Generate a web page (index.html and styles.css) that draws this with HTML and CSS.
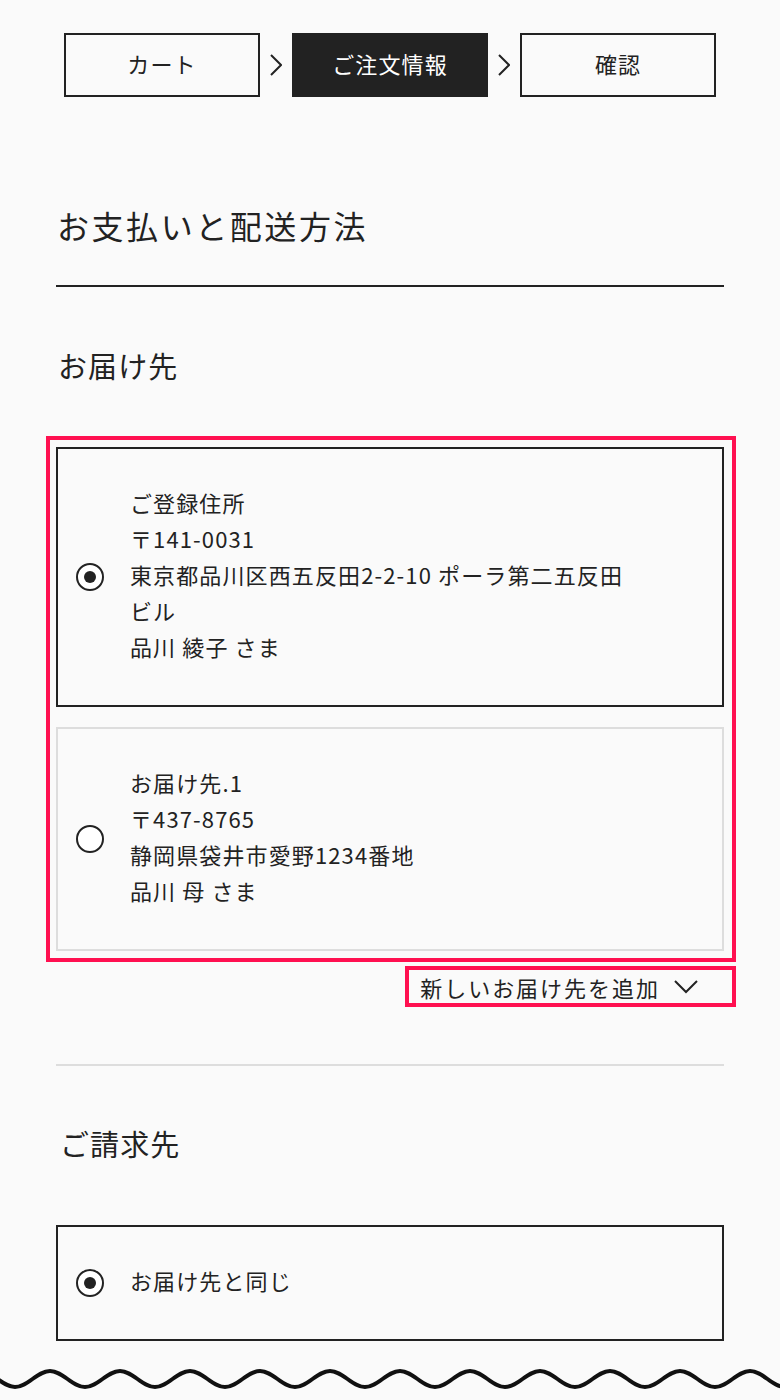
FILE: index.html
```html
<!DOCTYPE html>
<html lang="ja">
<head>
  <meta charset="UTF-8">
  <title>ご注文情報</title>
  <link rel="stylesheet" href="styles.css">
</head>
<body>

<!-- Steps -->
<ol class="steps">
  <li class="step">カート</li>
  <li class="step-arrow"><svg width="12" height="22" viewBox="0 0 12 22"><polyline points="1,1 11,11 1,21" /></svg></li>
  <li class="step active">ご注文情報</li>
  <li class="step-arrow"><svg width="12" height="22" viewBox="0 0 12 22"><polyline points="1,1 11,11 1,21" /></svg></li>
  <li class="step">確認</li>
</ol>

<div class="container">
  <h1 class="page-title">お支払いと配送方法</h1>

  <!-- Delivery address -->
  <section class="section">
    <h2 class="section-title">お届け先</h2>

    <div class="mark">
      <label class="option selected">
        <input type="radio" name="shipping" checked>
        <span class="option-text">
          ご登録住所<br>
          〒141-0031<br>
          東京都品川区西五反田2-2-10 ポーラ第二五反田<span class="word">ビル</span><br>
          品川 綾子 さま
        </span>
      </label>
      <label class="option">
        <input type="radio" name="shipping">
        <span class="option-text">
          お届け先.1<br>
          〒437-8765<br>
          静岡県袋井市愛野1234番地<br>
          品川 母 さま
        </span>
      </label>
    </div>

    <div class="add-row">
      <button class="add-link">
        新しいお届け先を追加
        <svg width="24" height="14" viewBox="0 0 24 14"><polyline points="1,1 12,12 23,1" /></svg>
      </button>
    </div>
  </section>

  <!-- Billing address -->
  <section class="section billing">
    <h2 class="section-title">ご請求先</h2>

    <label class="option selected">
      <input type="radio" name="billing" checked>
      <span class="option-text">お届け先と同じ</span>
    </label>
  </section>
</div>

<svg class="wave" width="780" height="32" viewBox="0 0 780 32">
  <path d="M-20 8 c13 0 22 16 35 16 s22 -16 35 -16 s22 16 35 16 s22 -16 35 -16 s22 16 35 16 s22 -16 35 -16 s22 16 35 16 s22 -16 35 -16 s22 16 35 16 s22 -16 35 -16 s22 16 35 16 s22 -16 35 -16 s22 16 35 16 s22 -16 35 -16 s22 16 35 16 s22 -16 35 -16 s22 16 35 16 s22 -16 35 -16 s22 16 35 16 s22 -16 35 -16 s22 16 35 16 s22 -16 35 -16 s22 16 35 16 s22 -16 35 -16 s22 16 35 16" />
</svg>

</body>
</html>
```

FILE: styles.css
```css
body {
  font-family: "Noto Sans CJK JP", "Noto Sans", sans-serif;
  margin: 0;
  background: #fafafa;
  color: #222;
  letter-spacing: 0.07em;
}

/* Steps */
.steps {
  display: flex;
  justify-content: center;
  align-items: center;
  list-style: none;
  margin: 33px 0 0;
  padding: 0;
}

.step {
  width: 196px;
  height: 64px;
  box-sizing: border-box;
  border: 2px solid #222;
  padding-bottom: 5px;
  display: flex;
  align-items: center;
  justify-content: center;
  font-size: 22px;
}

.step.active {
  background: #222;
  color: #fff;
}

.step-arrow {
  width: 32px;
  display: flex;
  justify-content: center;
}

.step-arrow svg polyline {
  fill: none;
  stroke: #222;
  stroke-width: 2;
}

/* Content */
.container {
  width: 668px;
  margin: 0 auto;
}

.page-title {
  font-size: 32px;
  font-weight: normal;
  line-height: 48px;
  letter-spacing: 0.08em;
  margin: 104px 0 0;
  padding: 0 0 36px 1px;
  border-bottom: 2px solid #222;
}

.section-title {
  font-size: 29px;
  font-weight: normal;
  line-height: 42px;
  margin: 57px 0 61px 2px;
}

.billing {
  margin-top: 57px;
  border-top: 2px solid #ddd;
}

.billing .section-title {
  margin-top: 56px;
  margin-left: 4px;
}

/* Red highlight boxes */
.mark {
  margin: -11px -12px 0 -10px;
  padding: 7px 8px 7px 6px;
  border: 4px solid #ff1050;
  display: flex;
  flex-direction: column;
  gap: 20px;
}

/* Options */
.option {
  display: flex;
  align-items: center;
  border: 2px solid #ddd;
  padding: 38px 60px 38px 18px;
  font-size: 22px;
  line-height: 36px;
  cursor: pointer;
}

.option.selected {
  border-color: #222;
}

.option-text {
  margin: -3px 0 3px;
}

.option .word {
  white-space: nowrap;
}

.option input {
  appearance: none;
  flex: none;
  width: 28px;
  height: 28px;
  margin: 0 26px 0 0;
  border: 2px solid #222;
  border-radius: 50%;
  display: flex;
  align-items: center;
  justify-content: center;
  background: #fff;
}

.option input:checked::after {
  content: "";
  width: 12px;
  height: 12px;
  border-radius: 50%;
  background: #222;
}

/* Add address */
.add-row {
  display: flex;
  justify-content: flex-end;
  margin: 4px -12px 0 0;
}

.add-link {
  display: flex;
  align-items: center;
  gap: 14px;
  height: 41px;
  box-sizing: border-box;
  padding: 0 34px 0 11px;
  border: 4px solid #ff1050;
  background: none;
  font-family: inherit;
  font-size: 22px;
  letter-spacing: 0.09em;
  color: #222;
  cursor: pointer;
}

.add-link svg polyline {
  fill: none;
  stroke: #222;
  stroke-width: 2;
}

.wave {
  display: block;
  margin-top: 22px;
}

.wave path {
  fill: none;
  stroke: #111;
  stroke-width: 4;
}
```
